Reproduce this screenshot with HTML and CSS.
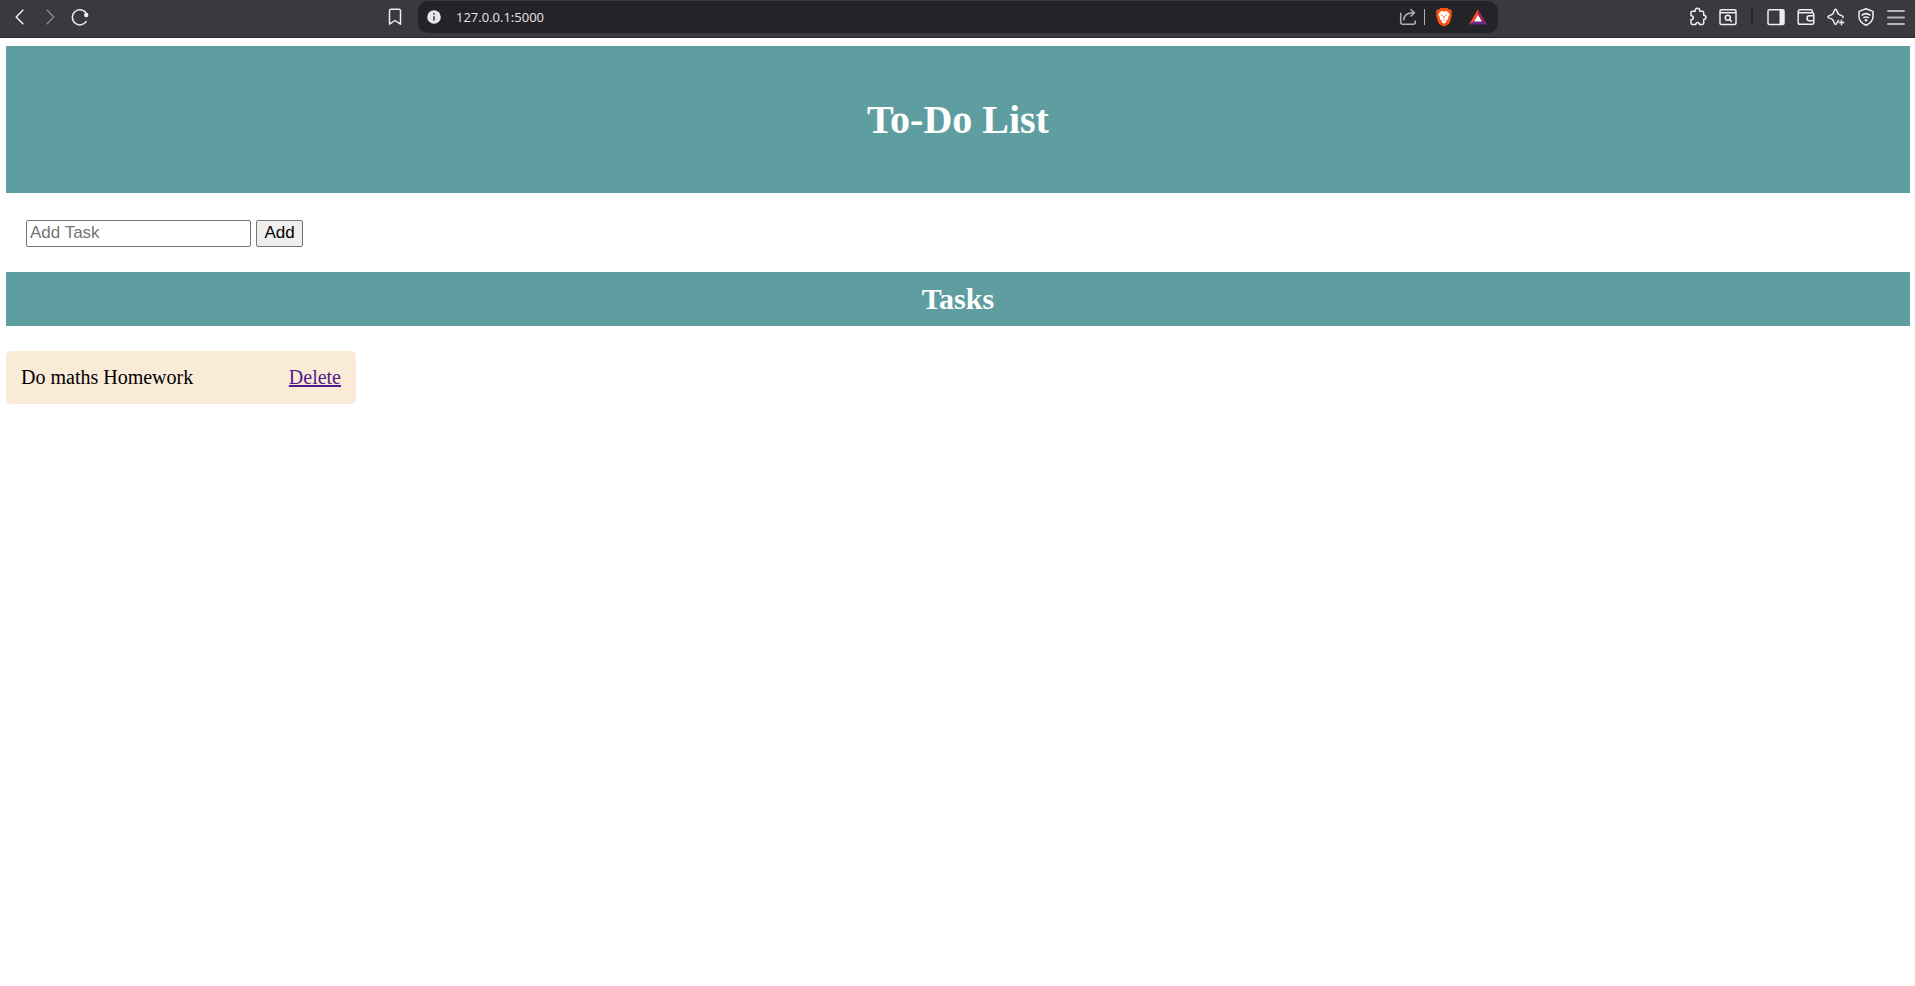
FILE: index.html
```html
<!DOCTYPE html>
<html lang="en">
<head>
<meta charset="utf-8">
<title>To-Do List</title>
<link rel="stylesheet" href="styles.css">
</head>
<body>
<div class="toolbar">
  <div class="group nav">
    <button class="tool" aria-label="Back"><svg viewBox="0 0 20 20"><path d="M13.3 2.7 6.2 10l7.1 7.3"/></svg></button>
    <button class="tool dim" aria-label="Forward"><svg viewBox="0 0 20 20"><path d="M6.7 2.7 13.8 10l-7.1 7.3"/></svg></button>
    <button class="tool" aria-label="Reload"><svg viewBox="0 0 20 20"><path d="M16.8 7A7.6 7.6 0 1 0 16.5 14.2"/><circle cx="16.2" cy="8" r="2.2" fill="currentColor" stroke="none"/></svg></button>
    <button class="tool bookmark" aria-label="Bookmark"><svg viewBox="0 0 20 20"><path d="M4.5 17.2V3.8a1.5 1.5 0 0 1 1.5-1.5h8a1.5 1.5 0 0 1 1.5 1.5v13.4L10 13.5z"/></svg></button>
  </div>
  <div class="address">
    <button class="site-info" aria-label="Site information"><svg viewBox="0 0 20 20"><circle cx="10" cy="10" r="6.8" fill="#e6e5ea" stroke="none"/><path d="M10 9.2v4.3M10 6v1.6" stroke="#4d4b52" stroke-width="1.8"/></svg></button>
    <input class="url" type="text" aria-label="Address" value="127.0.0.1:5000">
    <button class="tool share" aria-label="Share"><svg viewBox="0 0 20 20"><path d="M2.7 5.7v9.6a2 2 0 0 0 2 2h10.6a2 2 0 0 0 2-2v-1.8M5.8 13.2c0-4.4 2.8-7.4 9.8-7.4M12.5 2.2l4 3.6-4 3.7"/></svg></button>
    <span class="split"></span>
    <button class="tool" aria-label="Shields"><svg viewBox="0 0 20 20"><path d="M6.5 1h7l1.8 1.7 1.5-.1 1.200 2.200-.6 1.600.5 1.800-2 7.100a4 4 0 0 1-1.400 1.900L10 19.400l-4.500-2.200a4 4 0 0 1-1.400-1.900l-2-7.100.5-1.800L2 4.800l1.200-2.200 1.500.1z" fill="#fb5412" stroke="none"/><path d="m7.200 4 2.800.6 2.800-.6 3 3.200-1.700 3.400.3 1.600-2.400 1.400.6 1.200-2.600 1.900-2.600-1.900.6-1.200-2.400-1.400.3-1.600-1.700-3.400z" fill="#fff" stroke="none"/><path d="m6.400 7.600 2.500.4-.5 1.100zM13.600 7.600l-2.500.4.5 1.100zM9.500 9h1l.2 2-.7.500-.7-.5zM8 12.200l2 .700 2-.700-2 1.500z" fill="#fb5412" stroke="none"/></svg></button>
    <button class="tool rewards" aria-label="Rewards"><svg viewBox="0 0 20 20"><path d="M10 2 1 17.500l5-3 4-6.700z" fill="#ff4724" stroke="none"/><path d="M10 2v5.800l4 6.700 5 3z" fill="#9e1f63" stroke="none"/><path d="m1 17.500 5-3h8l5 3z" fill="#662d91" stroke="none"/><path d="m10 7.800 4 6.700H6z" fill="#fff" stroke="none"/></svg></button>
  </div>
  <div class="group actions">
    <button class="tool" aria-label="Extensions"><svg viewBox="0 0 20 20"><path d="M4.500 4.200H7.200c-.2-2 .8-3 2.300-3s2.500 1 2.300 3h2.400a1.500 1.500 0 0 1 1.500 1.500v2.500c1.400.1 2.300.9 2.300 2.100s-.9 2-2.300 2.100V16a1.500 1.500 0 0 1-1.500 1.500h-2.700c-.1-1.400-.7-2.100-1.800-2.100s-1.800.7-1.900 2.100H4.500A1.500 1.500 0 0 1 3 16v-3.300c1.500-.1 2.300-.8 2.300-2s-.8-1.900-2.300-2V5.700a1.500 1.500 0 0 1 1.500-1.500z"/></svg></button>
    <button class="tool" aria-label="Search tabs"><svg viewBox="0 0 20 20"><rect x="2" y="2.700" width="16" height="14.800" rx="1.500"/><path d="M2 5.700h16"/><circle cx="9.800" cy="10.700" r="2.500"/><path d="m11.700 12.600 2 2"/></svg></button>
    <span class="gap-line"></span>
    <button class="tool" aria-label="Side panel"><svg viewBox="0 0 20 20"><rect x="2" y="2.700" width="16" height="14.800" rx="1.500"/><path d="M13.500 2.700H18v14.800h-4.500z" fill="currentColor" stroke="none"/></svg></button>
    <button class="tool" aria-label="Wallet"><svg viewBox="0 0 20 20"><path d="M16.300 5.700V4.200a1.500 1.500 0 0 0-1.500-1.500H4a1.800 1.800 0 0 0-1.800 1.800v11a1.800 1.800 0 0 0 1.800 1.800h12.300a1.500 1.500 0 0 0 1.500-1.500V7.200a1.500 1.500 0 0 0-1.500-1.500H4a1.700 1.700 0 0 1-1.700-1.400M17.800 8.800h-4.300a2.500 2.500 0 0 0 0 5h4.300"/></svg></button>
    <button class="tool" aria-label="Assistant"><svg viewBox="0 0 20 20"><path d="M13 13.300c-1.300.5-1.700 1.400-2.300 3-.5 1.400-1.800 1.400-2.300 0-1-3.400-1.700-4.200-5.500-5.400-1.300-.5-1.300-1.500 0-2C6.700 7.600 7.400 6.900 8.400 3.200c.5-1.400 1.800-1.400 2.300 0 1 3.700 1.700 4.400 5.500 5.700 1.200.5 1.200 1.500.2 1.900"/><path d="M15.500 12.700v5.600M12.700 15.500h5.600"/></svg></button>
    <button class="tool" aria-label="VPN"><svg viewBox="0 0 20 20"><path d="m10 1.800 7 2.600v5.300c0 3.800-2.600 6.500-7 8.600-4.400-2.100-7-4.800-7-8.600V4.400zM5.500 8.300c2.800-2.100 6.200-2.100 9 0M7.300 10.900c1.700-1.200 3.700-1.200 5.400 0"/><circle cx="10" cy="13.200" r="1.300" fill="currentColor" stroke="none"/></svg></button>
    <button class="tool menu" aria-label="Menu"><svg viewBox="0 0 20 20"><path d="M2 4h16M2 10.500h16M2 17h16"/></svg></button>
  </div>
</div>
<main class="page">
  <header class="banner"><h1 class="title">To-Do List</h1></header>
  <form class="add-form">
    <input class="task-input" type="text" placeholder="Add Task" aria-label="Add Task">
    <button class="add-button" type="button">Add</button>
  </form>
  <h2 class="section-title">Tasks</h2>
  <div class="task">
    <span>Do maths Homework</span>
    <a class="delete" href="#">Delete</a>
  </div>
</main>
</body>
</html>
```

FILE: styles.css
```css
* {
  box-sizing: border-box;
}

body {
  margin: 0;
  background: #fff;
  font-family: "Liberation Serif", "Times New Roman", serif;
  font-size: 20px;
}

.toolbar {
  display: grid;
  grid-template-columns: 418fr 1080fr 417fr;
  height: 38px;
  padding-bottom: 4px;
  background: #3b393f;
  border-bottom: 1px solid #29272c;
}

.group {
  display: flex;
  align-items: center;
}

.nav {
  padding: 0 8px 0 5px;
}

.bookmark {
  margin-left: auto;
}

.actions {
  justify-content: flex-end;
  padding-right: 4px;
}

.tool,
.site-info {
  display: flex;
  flex: none;
  align-items: center;
  justify-content: center;
  width: 30px;
  height: 30px;
  padding: 0;
  border: 0;
  background: none;
  color: #eeedf2;
}

.tool svg,
.site-info svg {
  width: 20px;
  height: 20px;
  fill: none;
  stroke: currentColor;
  stroke-width: 1.5;
  stroke-linejoin: round;
}

.site-info {
  width: 20px;
}

.dim {
  color: #85838a;
}

.share {
  color: #b2b0b7;
}

.menu {
  color: #b8b6bd;
}

.menu svg {
  stroke-width: 2;
  stroke-linecap: round;
}

.address {
  display: flex;
  align-items: center;
  margin-top: 1px;
  padding: 0 5px 0 6px;
  border-radius: 10px;
  background: #242328;
}

.url {
  flex: 1;
  min-width: 0;
  margin-left: 12px;
  padding: 0;
  border: 0;
  background: none;
  color: #e4e3e8;
  font-family: "Open Sans", "Noto Sans", sans-serif;
  font-size: 13px;
}

.split {
  width: 1px;
  height: 16px;
  margin: 0 4px 0 1px;
  background: #b2b0b7;
}

.rewards {
  margin-left: 4px;
}

.gap-line {
  width: 2px;
  height: 16px;
  margin: 0 8px;
  background: #242328;
}

.page {
  padding: 8px 5px 8px 6px;
}

.banner {
  padding: 50px;
  background: cadetblue;
}

.title {
  margin: 0;
  color: #fff;
  font-size: 40px;
  line-height: 47px;
  text-align: center;
}

.add-form {
  display: flex;
  gap: 5px;
  padding: 27px 20px 25px;
}

.task-input,
.add-button {
  height: 27px;
  border: 1px solid #767676;
  border-radius: 2px;
  font-family: "Liberation Sans", Arial, sans-serif;
  font-size: 17px;
}

.task-input {
  width: 225px;
  padding: 0 3px 1px;
}

.add-button {
  min-width: 47px;
  padding: 0 7px 1px;
  background: #efefef;
  color: #000;
}

.section-title {
  margin: 0 0 25px;
  padding: 10px;
  background: cadetblue;
  color: #fff;
  font-size: 30px;
  line-height: 34px;
  text-align: center;
}

.task {
  display: flex;
  justify-content: space-between;
  width: 350px;
  max-width: 100%;
  padding: 15px;
  border-radius: 5px;
  background: antiquewhite;
  line-height: 23px;
}

.delete {
  color: #551a8b;
  text-decoration-thickness: 2px;
}
```
